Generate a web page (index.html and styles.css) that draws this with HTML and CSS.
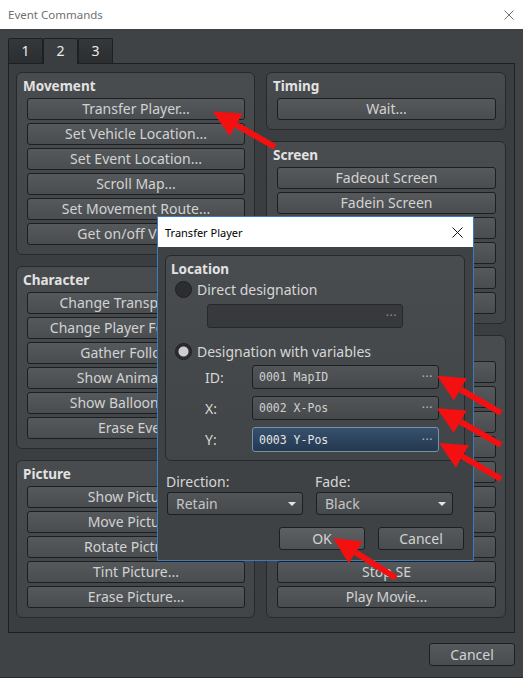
FILE: index.html
```html
<!DOCTYPE html>
<html lang="en">
<head>
	<meta charset="UTF-8">
	<title>Event Commands</title>
	<link rel="stylesheet" href="styles.css">
</head>
<body>
<div class="window">
	<div class="titlebar">
		<span class="title">Event Commands</span>
		<svg class="close" width="10" height="10" viewBox="0 0 10 10"><path d="M0.5 0.5L9.5 9.5M9.5 0.5L0.5 9.5"/></svg>
	</div>
	<div class="client">
		<div class="tabs">
			<div class="tab">1</div>
			<div class="tab active">2</div>
			<div class="tab">3</div>
		</div>
		<div class="page">
			<div class="column">
				<div class="group">
					<div class="group-title">Movement</div>
					<div class="buttons">
						<button class="btn">Transfer Player...</button>
						<button class="btn">Set Vehicle Location...</button>
						<button class="btn">Set Event Location...</button>
						<button class="btn">Scroll Map...</button>
						<button class="btn">Set Movement Route...</button>
						<button class="btn">Get on/off Vehicle</button>
					</div>
				</div>
				<div class="group">
					<div class="group-title">Character</div>
					<div class="buttons">
						<button class="btn">Change Transparency...</button>
						<button class="btn">Change Player Followers...</button>
						<button class="btn">Gather Followers</button>
						<button class="btn">Show Animation...</button>
						<button class="btn">Show Balloon Icon...</button>
						<button class="btn">Erase Event</button>
					</div>
				</div>
				<div class="group">
					<div class="group-title">Picture</div>
					<div class="buttons">
						<button class="btn">Show Picture...</button>
						<button class="btn">Move Picture...</button>
						<button class="btn">Rotate Picture...</button>
						<button class="btn">Tint Picture...</button>
						<button class="btn">Erase Picture...</button>
					</div>
				</div>
			</div>
			<div class="column">
				<div class="group">
					<div class="group-title">Timing</div>
					<div class="buttons">
						<button class="btn">Wait...</button>
					</div>
				</div>
				<div class="group">
					<div class="group-title">Screen</div>
					<div class="buttons">
						<button class="btn">Fadeout Screen</button>
						<button class="btn">Fadein Screen</button>
						<button class="btn">Tint Screen...</button>
						<button class="btn">Flash Screen...</button>
						<button class="btn">Shake Screen...</button>
						<button class="btn">Set Weather Effect...</button>
					</div>
				</div>
				<div class="group">
					<div class="group-title">Audio &amp; Video</div>
					<div class="buttons">
						<button class="btn">Play BGM...</button>
						<button class="btn">Fadeout BGM...</button>
						<button class="btn">Save BGM</button>
						<button class="btn">Resume BGM</button>
						<button class="btn">Play BGS...</button>
						<button class="btn">Fadeout BGS...</button>
						<button class="btn">Play ME...</button>
						<button class="btn">Play SE...</button>
						<button class="btn">Stop SE</button>
						<button class="btn">Play Movie...</button>
					</div>
				</div>
			</div>
		</div>
		<div class="footer">
			<button class="btn wide">Cancel</button>
		</div>
	</div>

	<!-- modal: Transfer Player -->
	<div class="dialog">
		<div class="dialog-titlebar">
			<span class="dialog-title">Transfer Player</span>
			<svg class="dialog-close" width="11" height="11" viewBox="0 0 11 11"><path d="M0.5 0.5L10.5 10.5M10.5 0.5L0.5 10.5"/></svg>
		</div>
		<div class="dialog-body">
			<div class="group location">
				<div class="group-title">Location</div>
				<div class="radio-row">
					<span class="radio"></span>
					<span class="radio-label">Direct designation</span>
				</div>
				<div class="map-field"><span class="dots">···</span></div>
				<div class="radio-row second">
					<span class="radio checked"></span>
					<span class="radio-label">Designation with variables</span>
				</div>
				<div class="var-rows">
					<div class="var-row">
						<span class="var-label">ID:</span>
						<div class="var-field"><span class="mono">0001 MapID</span><span class="dots">···</span></div>
					</div>
					<div class="var-row">
						<span class="var-label">X:</span>
						<div class="var-field"><span class="mono">0002 X-Pos</span><span class="dots">···</span></div>
					</div>
					<div class="var-row">
						<span class="var-label">Y:</span>
						<div class="var-field focused"><span class="mono">0003 Y-Pos</span><span class="dots">···</span></div>
					</div>
				</div>
			</div>
			<div class="options">
				<label class="option-label">Direction:</label>
				<label class="option-label">Fade:</label>
				<div class="combo"><span>Retain</span><span class="caret"></span></div>
				<div class="combo"><span>Black</span><span class="caret"></span></div>
			</div>
			<div class="dialog-buttons">
				<button class="btn wide default">OK</button>
				<button class="btn wide">Cancel</button>
			</div>
		</div>
	</div>

	<!-- red callout arrows -->
	<svg class="arrows" width="523" height="678" viewBox="0 0 523 678">
		<defs>
			<marker id="head" markerUnits="userSpaceOnUse" markerWidth="27" markerHeight="26" refX="0" refY="13" orient="auto" viewBox="0 0 27 26">
				<path d="M0 0L27 13L0 26z" fill="#f41010"/>
			</marker>
		</defs>
		<g stroke="#f41010" stroke-width="6" marker-end="url(#head)">
			<line x1="275" y1="147" x2="236.2" y2="124.8"/>
			<line x1="501" y1="413" x2="460.4" y2="389.4"/>
			<line x1="501" y1="445" x2="460.3" y2="421.7"/>
			<line x1="501" y1="479" x2="462.4" y2="456.5"/>
			<line x1="396" y1="578" x2="355.8" y2="552.5"/>
		</g>
	</svg>
</div>
</body>
</html>
```

FILE: styles.css
```css
* {
	margin: 0;
	padding: 0;
	box-sizing: border-box;
}
body {
	width: 523px;
	height: 678px;
	overflow: hidden;
	background-color: #404346;
	font-family: "Noto Sans", sans-serif;
	font-size: 14px;
	color: #d4d4d4;
}
button {
	font: inherit;
	color: inherit;
}

.window {
	position: relative;
	width: 523px;
	height: 678px;
	display: flex;
	flex-direction: column;
	border-bottom: 1px solid #27292b;
}

/* title bars */
.titlebar {
	height: 29px;
	flex: none;
	background-color: #fff;
	display: flex;
	align-items: center;
	justify-content: space-between;
	padding: 0 9px 0 8px;
}
.title {
	font-size: 11.5px;
	color: #707070;
}
.close path {
	stroke: #707070;
	stroke-width: 1;
	fill: none;
}

.client {
	flex: 1;
	display: flex;
	flex-direction: column;
	padding: 9px 8px 0;
	background-color: #404346;
}

/* tabs */
.tabs {
	display: flex;
	height: 25px;
	position: relative;
	z-index: 1;
}
.tab {
	width: 35px;
	height: 25px;
	border: 1px solid #1d1f21;
	border-bottom: none;
	border-radius: 2px 2px 0 0;
	background: linear-gradient(#35383b, #2b2e30);
	color: #ececec;
	text-align: center;
	line-height: 24px;
}
.tab.active {
	height: 26px;
	background: #3b3e41;
}

.page {
	width: 507px;
	height: 570px;
	border: 1px solid #1d1f21;
	background-color: #3b3e41;
	padding: 8px 8px 15px 7px;
	display: grid;
	grid-template-columns: 239px 240px;
	column-gap: 11px;
}
.column {
	display: flex;
	flex-direction: column;
	justify-content: space-between;
	gap: 11px;
}

/* group boxes */
.group {
	border: 1px solid #27292c;
	border-radius: 6px;
	background: linear-gradient(#494c4f, #424548);
	padding: 4px 9px 9px 6px;
}
.group-title {
	font-weight: bold;
	font-size: 13.5px;
	line-height: 18px;
	margin-bottom: 3px;
	color: #e2e2e2;
}
.buttons {
	display: flex;
	flex-direction: column;
	gap: 3px;
	margin-left: 4px;
}

.btn {
	height: 22px;
	border: 1px solid #1c1e20;
	border-radius: 3px;
	background: linear-gradient(#56595c, #4a4d50);
	color: #d2d2d2;
	line-height: 20px;
	text-align: center;
	white-space: nowrap;
	overflow: hidden;
}
.btn.wide {
	width: 86px;
	height: 23px;
}
.btn.default {
	background: linear-gradient(#5d6063, #4f5255);
}

.footer {
	display: flex;
	justify-content: flex-end;
	padding-top: 10px;
}

/* Transfer Player dialog */
.dialog {
	position: absolute;
	left: 157px;
	top: 216px;
	width: 317px;
	height: 345px;
	z-index: 2;
	border: 1px solid #3a7cc0;
	background-color: #3f4245;
	display: flex;
	flex-direction: column;
}
.dialog-titlebar {
	height: 30px;
	flex: none;
	background-color: #fff;
	display: flex;
	align-items: center;
	justify-content: space-between;
	padding: 0 10px 0 7px;
}
.dialog-title {
	font-size: 11px;
	color: #000;
}
.dialog-close path {
	stroke: #111;
	stroke-width: 1;
	fill: none;
}
.dialog-body {
	padding: 8px 8px 0 7px;
}

.location {
	padding: 4px 0 8px 0;
}
.location .group-title {
	margin: 0 0 3px 5px;
}
.radio-row {
	display: flex;
	align-items: center;
	height: 17px;
	padding-left: 9px;
}
.radio-row.second {
	margin-top: 15px;
}
.radio {
	width: 17px;
	height: 17px;
	border-radius: 50%;
	border: 1px solid #1b1d1f;
	background: radial-gradient(circle, #2b2d30 60%, #34373a);
}
.radio.checked {
	background: radial-gradient(circle, #cdcdcd 0 4.5px, #2b2d30 5.5px, #2b2d30 60%, #34373a);
}
.radio-label {
	margin-left: 5px;
	line-height: 17px;
	color: #d6d6d6;
}
.map-field {
	margin: 6px 0 0 41px;
	width: 196px;
	height: 24px;
	border: 1px solid #26282a;
	border-radius: 3px;
	background-color: #37393c;
	display: flex;
	align-items: center;
	justify-content: flex-end;
	padding-right: 5px;
	color: #8e8e8e;
}
/* the "..." browse buttons */
.dots {
	font-size: 12px;
	letter-spacing: 0.5px;
	line-height: 1;
	color: #b4b4b4;
}
.map-field .dots {
	color: #8e8e8e;
}

.var-rows {
	margin-top: 5px;
	display: flex;
	flex-direction: column;
	gap: 7px;
}
.var-row {
	display: flex;
	align-items: center;
	padding-left: 39px;
}
.var-label {
	width: 47px;
	color: #d6d6d6;
}
.var-field {
	width: 187px;
	height: 24px;
	border: 1px solid #1c1e20;
	border-radius: 3px;
	background: linear-gradient(#525558, #46494c);
	display: flex;
	align-items: center;
	justify-content: space-between;
	padding: 0 5px 0 6px;
	color: #d0d0d0;
}
.var-field.focused {
	height: 25px;
	border-color: #7890aa;
	background: linear-gradient(#36506d, #253950);
	color: #e4e4e4;
}
.mono {
	font-family: "DejaVu Sans Mono", monospace;
	font-size: 11.5px;
}

.options {
	display: grid;
	grid-template-columns: 136px 137px;
	column-gap: 13px;
	margin-left: 2px;
}
.option-label {
	margin-top: 11px;
	line-height: 20px;
	margin-left: -1px;
	color: #d6d6d6;
}
.combo {
	height: 23px;
	border: 1px solid #1c1e20;
	border-radius: 3px;
	background: linear-gradient(#525558, #46494c);
	display: flex;
	align-items: center;
	justify-content: space-between;
	padding: 0 6px 0 8px;
	color: #c4c4c4;
}
.caret {
	width: 0;
	height: 0;
	border-left: 4px solid transparent;
	border-right: 4px solid transparent;
	border-top: 4px solid #e4e4e4;
}

.dialog-buttons {
	display: flex;
	justify-content: flex-end;
	gap: 13px;
	margin: 12px 1px 0 0;
}

.arrows {
	position: absolute;
	left: 0;
	top: 0;
	z-index: 3;
	pointer-events: none;
}
```
